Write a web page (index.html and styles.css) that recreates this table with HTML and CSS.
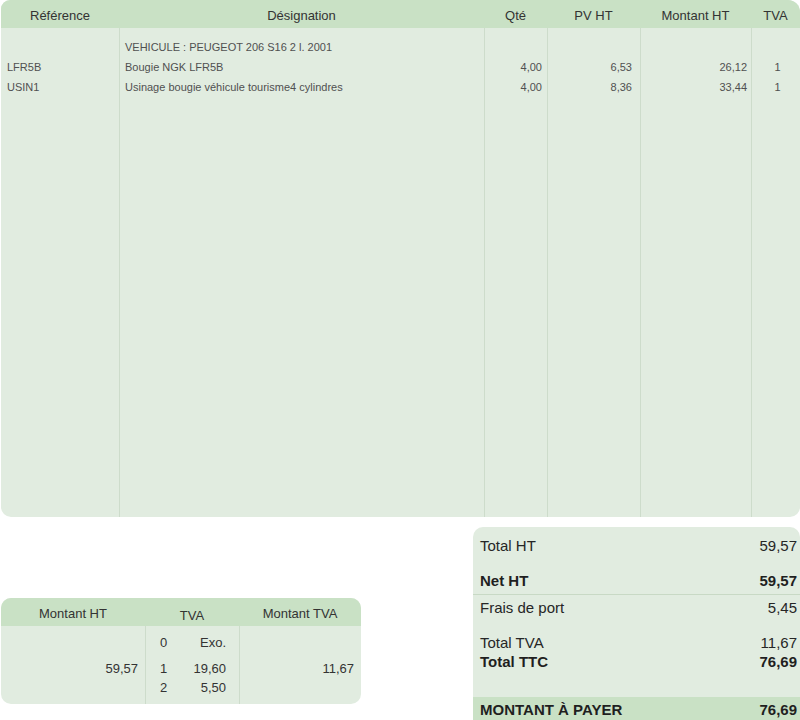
FILE: index.html
```html
<!DOCTYPE html>
<html lang="fr">
<head>
<meta charset="utf-8">
<title>Facture</title>
<link rel="stylesheet" href="styles.css">
</head>
<body>
<div class="page">
  <div class="lines-table">
    <div class="lt-head">
      <div>Référence</div>
      <div>Désignation</div>
      <div>Qté</div>
      <div>PV HT</div>
      <div>Montant HT</div>
      <div>TVA</div>
    </div>
    <div class="lt-body">
      <div class="col col-ref">
        <div class="ln"></div>
        <div class="ln">LFR5B</div>
        <div class="ln">USIN1</div>
      </div>
      <div class="col col-des">
        <div class="ln">VEHICULE : PEUGEOT 206 S16 2 l. 2001</div>
        <div class="ln">Bougie NGK LFR5B</div>
        <div class="ln">Usinage bougie véhicule tourisme4 cylindres</div>
      </div>
      <div class="col col-num col-qte">
        <div class="ln"></div>
        <div class="ln">4,00</div>
        <div class="ln">4,00</div>
      </div>
      <div class="col col-num col-pv">
        <div class="ln"></div>
        <div class="ln">6,53</div>
        <div class="ln">8,36</div>
      </div>
      <div class="col col-num col-mt">
        <div class="ln"></div>
        <div class="ln">26,12</div>
        <div class="ln">33,44</div>
      </div>
      <div class="col col-tva">
        <div class="ln"></div>
        <div class="ln">1</div>
        <div class="ln">1</div>
      </div>
    </div>
  </div>

  <div class="bottom">
    <div class="vat-table">
      <div class="vt-head">
        <div>Montant HT</div>
        <div class="vt-head-tva">TVA</div>
        <div>Montant TVA</div>
      </div>
      <div class="vt-body">
        <div class="vcol vcol-num">
          <div class="vl vl1"></div>
          <div class="vl vl2">59,57</div>
          <div class="vl vl3"></div>
        </div>
        <div class="vcol vcol-rate">
          <div class="vl vl1 rate"><span>0</span><span>Exo.</span></div>
          <div class="vl vl2 rate"><span>1</span><span>19,60</span></div>
          <div class="vl vl3 rate"><span>2</span><span>5,50</span></div>
        </div>
        <div class="vcol vcol-num">
          <div class="vl vl1"></div>
          <div class="vl vl2">11,67</div>
          <div class="vl vl3"></div>
        </div>
      </div>
    </div>

    <div class="totals">
      <div class="tr tr-ht"><span>Total HT</span><span>59,57</span></div>
      <div class="tr tr-net strong"><span>Net HT</span><span>59,57</span></div>
      <div class="tr tr-port"><span>Frais de port</span><span>5,45</span></div>
      <div class="tr tr-tva"><span>Total TVA</span><span>11,67</span></div>
      <div class="tr tr-ttc strong"><span>Total TTC</span><span>76,69</span></div>
      <div class="tr tr-pay strong"><span>MONTANT À PAYER</span><span>76,69</span></div>
    </div>
  </div>
</div>
</body>
</html>
```

FILE: styles.css
```css
html, body {
  margin: 0;
  padding: 0;
  background: #ffffff;
  overflow: hidden;
}

body {
  font-family: "Liberation Sans", Arial, sans-serif;
  color: #333333;
}

.page {
  width: 799px;
  margin-left: 1px;
}

/* ---------- main lines table ---------- */
.lines-table {
  border-radius: 9px 12px 10px 10px;
  overflow: hidden;
  background: #e1ece0;
}

.lt-head,
.lt-body {
  display: grid;
  grid-template-columns: 118px 365px 63px 93px 111px 1fr;
}

.lt-head {
  height: 28px;
  box-sizing: border-box;
  padding-top: 2px;
  background: #c9e1c5;
  align-items: center;
  text-align: center;
  font-size: 13px;
  color: #333333;
}

.lt-body {
  height: 489px;
  font-size: 11px;
  color: #505050;
}

.col {
  padding-top: 9px;
  border-left: 1px solid #cddccb;
}

.col-ref {
  border-left: none;
  padding-left: 6px;
}

.col-des {
  padding-left: 5px;
}

.col-num {
  text-align: right;
}

.col-qte { padding-right: 5px; }
.col-pv { padding-right: 8px; }
.col-mt { padding-right: 4px; }

.col-tva {
  text-align: center;
  padding-left: 3px;
}

.ln {
  height: 20px;
  line-height: 20px;
  white-space: nowrap;
}

/* ---------- bottom area ---------- */
.bottom {
  display: flex;
  align-items: flex-start;
  margin-top: 10px;
}

.vat-table {
  width: 360px;
  margin-top: 71px;
  background: #e1ece0;
  border-radius: 10px;
  overflow: hidden;
  font-size: 13px;
  color: #333333;
}

.vt-head,
.vt-body {
  display: grid;
  grid-template-columns: 144px 94px 1fr;
}

.vt-head {
  height: 28px;
  box-sizing: border-box;
  padding-top: 2px;
  background: #c9e1c5;
  align-items: center;
  text-align: center;
}

.vt-head-tva {
  padding-top: 4px;
}

.vt-body {
  height: 78px;
}

.vcol {
  padding-top: 8px;
  border-left: 1px solid #cddccb;
}

.vcol:first-child {
  border-left: none;
}

.vcol-num {
  text-align: right;
  padding-right: 7px;
}

.vcol-rate {
  padding: 8px 13px 0 14px;
}

.vl {
  height: 18px;
  line-height: 18px;
}

.vl2 { margin-top: 8px; }
.vl3 { margin-top: 1px; }

.rate {
  display: flex;
  justify-content: space-between;
}

/* ---------- totals ---------- */
.totals {
  width: 327px;
  margin-left: auto;
  background: #e1ece0;
  border-radius: 10px 10px 0 0;
  padding-top: 10px;
  font-size: 15px;
  color: #262626;
}

.tr {
  display: flex;
  justify-content: space-between;
  padding: 0 3px 0 7px;
  height: 18px;
  line-height: 18px;
}

.strong {
  font-weight: bold;
  color: #1f1f1f;
}

.tr-net {
  margin-top: 16px;
  height: 23px;
  line-height: 20px;
  border-bottom: 1px solid #c8d9c5;
}

.tr-port {
  margin-top: 4px;
}

.tr-tva {
  margin-top: 17px;
}

.tr-ttc {
  margin-top: 1px;
}

.tr-pay {
  margin-top: 26px;
  height: 26px;
  line-height: 26px;
  background: #c9e1c5;
}
```
